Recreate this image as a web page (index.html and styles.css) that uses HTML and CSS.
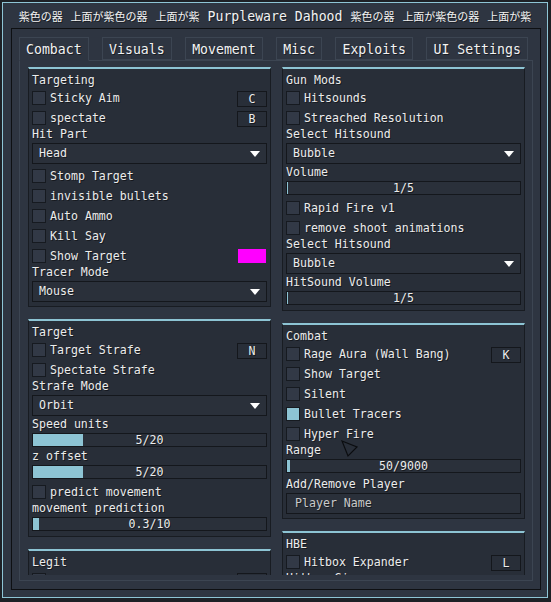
FILE: index.html
```html
<!DOCTYPE html>
<html>
<head>
<meta charset="utf-8">
<link rel="stylesheet" href="styles.css">
</head>
<body>
<div class="window">
  <div class="title"><span class="cjk">紫色の器</span> <span class="cjk">上面が紫色の器</span> <span class="cjk">上面が紫</span> Purpleware Dahood <span class="cjk">紫色の器</span> <span class="cjk">上面が紫色の器</span> <span class="cjk">上面が紫</span></div>
  <div class="frame">
    <div class="tabs">
      <div class="tab active">Combact</div>
      <div class="tab">Visuals</div>
      <div class="tab">Movement</div>
      <div class="tab">Misc</div>
      <div class="tab">Exploits</div>
      <div class="tab">UI Settings</div>
    </div>
    <div class="page">
      <div class="scroll">
        <div class="col">
          <section class="box">
            <div class="lbl">Targeting</div>
            <div class="row"><span class="cb"></span><span>Sticky Aim</span><span class="key">C</span></div>
            <div class="row"><span class="cb"></span><span>spectate</span><span class="key">B</span></div>
            <div class="lbl">Hit Part</div>
            <div class="dd"><span>Head</span><svg class="arrow" width="10" height="6" viewBox="0 0 10 6"><polygon points="0,0 10,0 5,6" fill="#ffffff"/></svg></div>
            <div class="row"><span class="cb"></span><span>Stomp Target</span></div>
            <div class="row"><span class="cb"></span><span>invisible bullets</span></div>
            <div class="row"><span class="cb"></span><span>Auto Ammo</span></div>
            <div class="row"><span class="cb"></span><span>Kill Say</span></div>
            <div class="row"><span class="cb"></span><span>Show Target</span><span class="swatch"></span></div>
            <div class="lbl">Tracer Mode</div>
            <div class="dd"><span>Mouse</span><svg class="arrow" width="10" height="6" viewBox="0 0 10 6"><polygon points="0,0 10,0 5,6" fill="#ffffff"/></svg></div>
          </section>
          <section class="box">
            <div class="lbl">Target</div>
            <div class="row"><span class="cb"></span><span>Target Strafe</span><span class="key">N</span></div>
            <div class="row"><span class="cb"></span><span>Spectate Strafe</span></div>
            <div class="lbl">Strafe Mode</div>
            <div class="dd"><span>Orbit</span><svg class="arrow" width="10" height="6" viewBox="0 0 10 6"><polygon points="0,0 10,0 5,6" fill="#ffffff"/></svg></div>
            <div class="lbl">Speed units</div>
            <div class="slider"><div class="bar"><span class="fill" style="width:50px"></span><span class="val">5/20</span></div></div>
            <div class="lbl">z offset</div>
            <div class="slider"><div class="bar"><span class="fill" style="width:50px"></span><span class="val">5/20</span></div></div>
            <div class="row"><span class="cb"></span><span>predict movement</span></div>
            <div class="lbl">movement prediction</div>
            <div class="slider"><div class="bar"><span class="fill" style="width:6px"></span><span class="val">0.3/10</span></div></div>
          </section>
          <section class="box">
            <div class="lbl">Legit</div>
            <div class="row"><span class="cb"></span><span>Godmode</span><span class="key">X</span></div>
            <div class="lbl">Smoothness</div>
          </section>
        </div>
        <div class="col">
          <section class="box">
            <div class="lbl">Gun Mods</div>
            <div class="row"><span class="cb"></span><span>Hitsounds</span></div>
            <div class="row"><span class="cb"></span><span>Streached Resolution</span></div>
            <div class="lbl">Select Hitsound</div>
            <div class="dd"><span>Bubble</span><svg class="arrow" width="10" height="6" viewBox="0 0 10 6"><polygon points="0,0 10,0 5,6" fill="#ffffff"/></svg></div>
            <div class="lbl">Volume</div>
            <div class="slider"><div class="bar"><span class="fill" style="width:1px"></span><span class="val">1/5</span></div></div>
            <div class="row"><span class="cb"></span><span>Rapid Fire v1</span></div>
            <div class="row"><span class="cb"></span><span>remove shoot animations</span></div>
            <div class="lbl">Select Hitsound</div>
            <div class="dd"><span>Bubble</span><svg class="arrow" width="10" height="6" viewBox="0 0 10 6"><polygon points="0,0 10,0 5,6" fill="#ffffff"/></svg></div>
            <div class="lbl">HitSound Volume</div>
            <div class="slider"><div class="bar"><span class="fill" style="width:1px"></span><span class="val">1/5</span></div></div>
          </section>
          <section class="box">
            <div class="lbl">Combat</div>
            <div class="row"><span class="cb"></span><span>Rage Aura (Wall Bang)</span><span class="key">K</span></div>
            <div class="row"><span class="cb"></span><span>Show Target</span></div>
            <div class="row"><span class="cb"></span><span>Silent</span></div>
            <div class="row"><span class="cb on"></span><span>Bullet Tracers</span></div>
            <div class="row"><span class="cb"></span><span>Hyper Fire</span></div>
            <div class="lbl">Range</div>
            <div class="slider"><div class="bar"><span class="fill" style="width:3px"></span><span class="val">50/9000</span></div></div>
            <div class="lbl spaced">Add/Remove Player</div>
            <div class="input">Player Name</div>
          </section>
          <section class="box">
            <div class="lbl">HBE</div>
            <div class="row"><span class="cb"></span><span>Hitbox Expander</span><span class="key">L</span></div>
            <div class="lbl">Hitbox Size</div>
          </section>
        </div>
      </div>
    </div>
  </div>
  <svg class="cursor" width="18" height="18" viewBox="0 0 18 18"><polygon points="1,1 16,7 7,16" fill="none" stroke="#0b0d10" stroke-width="1.2"/></svg>
</div>
</body>
</html>
```
FILE: styles.css
```css
* {
  box-sizing: border-box;
  margin: 0;
  padding: 0;
}

html, body {
  background: #1d2025;
}

body {
  padding: 2px;
  font-family: "DejaVu Sans Mono", monospace;
  font-size: 11.6px;
  color: #ececec;
  text-shadow: 1px 1px 0 rgba(0, 0, 0, 0.45);
}

.window {
  position: relative;
  width: 546px;
  height: 596px;
  border: 1px solid #8dc4d4;
  background: #2e3541;
  display: flex;
  flex-direction: column;
}

.title {
  height: 25px;
  line-height: 26px;
  text-align: center;
  font-size: 13.2px;
  white-space: nowrap;
  color: #f2f2f2;
}

.cjk {
  font-family: "Noto Sans CJK JP", sans-serif;
  font-size: 11px;
}

.frame {
  margin: 0 6px 7px 8px;
  height: 562px;
  border: 1px solid #0e1013;
  padding: 8px 7px;
}

.tabs {
  display: flex;
  align-items: flex-end;
  gap: 13.5px;
  height: 24px;
  border-bottom: 1px solid #3c4552;
}

.tab {
  height: 23px;
  padding: 2px 6px 0;
  line-height: 19px;
  border: 1px solid #3c4552;
  font-size: 13.2px;
  color: #f2f2f2;
  white-space: nowrap;
}

.tab.active {
  height: 24px;
  margin-bottom: -1px;
  border-bottom-color: #2e3541;
  background: #2e3541;
}

.page {
  height: 520px;
  border: 1px solid #3c4552;
  border-top: none;
  padding-bottom: 5px;
}

.scroll {
  height: 514px;
  overflow: hidden;
  padding: 6px 7px 0 8px;
  display: grid;
  grid-template-columns: 243px 243px;
  column-gap: 11px;
  align-items: start;
}

.col {
  display: flex;
  flex-direction: column;
  gap: 12px;
}

.box {
  background: #282e38;
  border: 1px solid #181c22;
  border-top: 2px solid #8dc4d4;
  padding: 6px 3px 4px;
  display: flex;
  flex-direction: column;
  gap: 3px;
}

.lbl {
  height: 11px;
  line-height: 11px;
  white-space: nowrap;
}

.lbl.spaced {
  margin-top: 2px;
}

.row {
  height: 17px;
  display: flex;
  align-items: center;
  gap: 4px;
  white-space: nowrap;
}

.cb {
  flex: none;
  width: 14px;
  height: 14px;
  border: 1px solid #161a20;
  background: #323946;
}

.cb.on {
  background: #8dc4d4;
}

.key {
  flex: none;
  margin-left: auto;
  align-self: flex-start;
  margin-top: 2px;
  width: 30px;
  height: 16px;
  border: 1px solid #14171c;
  text-align: center;
  line-height: 14px;
}

.swatch {
  flex: none;
  margin-left: auto;
  margin-right: 1px;
  width: 28px;
  height: 14px;
  background: #ff00ff;
}

.dd {
  height: 21px;
  border: 1px solid #14171c;
  background: #2a303a;
  display: flex;
  align-items: center;
  justify-content: space-between;
  padding: 0 6px 0 6px;
  line-height: 19px;
}

.arrow {
  flex: none;
}

.slider {
  height: 15px;
}

.bar {
  position: relative;
  height: 14px;
  border: 1px solid #14171c;
  background: #2a303a;
  text-align: center;
  line-height: 12px;
}

.fill {
  position: absolute;
  left: 0;
  top: 0;
  bottom: 0;
  background: #8dc4d4;
}

.val {
  position: relative;
}

.input {
  height: 21px;
  border: 1px solid #14171c;
  background: #2a303a;
  padding-left: 8px;
  line-height: 19px;
  color: #c9c9c9;
}

.cursor {
  position: absolute;
  left: 338px;
  top: 437px;
}
```
